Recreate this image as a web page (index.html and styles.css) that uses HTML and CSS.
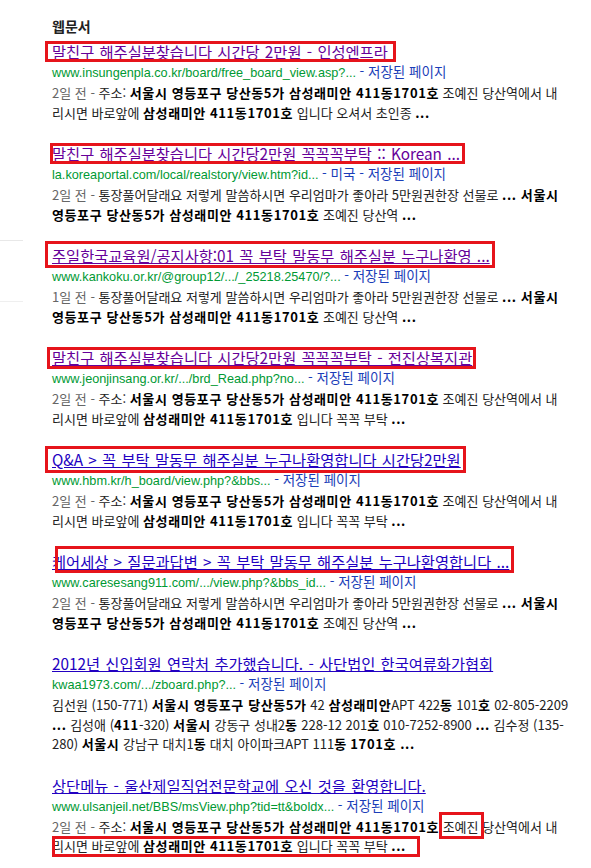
FILE: index.html
```html
<!DOCTYPE html>
<html lang="ko">
<head>
<meta charset="utf-8">
<title>웹문서</title>
<link rel="stylesheet" href="styles.css">
</head>
<body>
<div class="page">
  <div class="side"><div class="side-box"></div></div>
  <div class="main">
    <h2 class="heading">웹문서</h2>

    <div class="result">
      <div class="title"><a class="visited" href="#">말친구 해주실분찾습니다 시간당 2만원 - 인성엔프라</a><span class="mark m1"></span></div>
      <div class="url">www.insungenpla.co.kr/board/free_board_view.asp?... <span class="meta">- <a href="#">저장된 페이지</a></span></div>
      <div class="snippet"><span class="date">2일 전 - </span>주소: <b>서울시 영등포구 당산동5가 삼성래미안 411동1701호</b> 조예진 당산역에서 내<br>리시면 바로앞에 <b>삼성래미안 411동1701호</b> 입니다 오셔서 초인종 <b>...</b></div>
    </div>

    <div class="result">
      <div class="title"><a class="visited" href="#">말친구 해주실분찾습니다 시간당2만원 꼭꼭꼭부탁 :: Korean ...</a><span class="mark m2"></span></div>
      <div class="url">la.koreaportal.com/local/realstory/view.htm?id... <span class="meta">- <a href="#">미국</a> - <a href="#">저장된 페이지</a></span></div>
      <div class="snippet"><span class="date">2일 전 - </span>통장풀어달래요 저렇게 말씀하시면 우리엄마가 좋아라 5만원권한장 선물로 <b>... 서울시</b><br><b>영등포구 당산동5가 삼성래미안 411동1701호</b> 조예진 당산역 <b>...</b></div>
    </div>

    <div class="result">
      <div class="title"><a class="visited" href="#">주일한국교육원/공지사항:01 꼭 부탁 말동무 해주실분 누구나환영 ...</a><span class="mark m3"></span></div>
      <div class="url">www.kankoku.or.kr/@group12/.../_25218.25470/?... <span class="meta">- <a href="#">저장된 페이지</a></span></div>
      <div class="snippet"><span class="date">1일 전 - </span>통장풀어달래요 저렇게 말씀하시면 우리엄마가 좋아라 5만원권한장 선물로 <b>... 서울시</b><br><b>영등포구 당산동5가 삼성래미안 411동1701호</b> 조예진 당산역 <b>...</b></div>
    </div>

    <div class="result">
      <div class="title"><a class="visited" href="#">말친구 해주실분찾습니다 시간당2만원 꼭꼭꼭부탁 - 전진상복지관</a><span class="mark m4"></span></div>
      <div class="url">www.jeonjinsang.or.kr/.../brd_Read.php?no... <span class="meta">- <a href="#">저장된 페이지</a></span></div>
      <div class="snippet"><span class="date">2일 전 - </span>주소: <b>서울시 영등포구 당산동5가 삼성래미안 411동1701호</b> 조예진 당산역에서 내<br>리시면 바로앞에 <b>삼성래미안 411동1701호</b> 입니다 꼭꼭 부탁 <b>...</b></div>
    </div>

    <div class="result">
      <div class="title"><a href="#">Q&amp;A &gt; 꼭 부탁 말동무 해주실분 누구나환영합니다 시간당2만원</a><span class="mark m5"></span></div>
      <div class="url">www.hbm.kr/h_board/view.php?&amp;bbs... <span class="meta">- <a href="#">저장된 페이지</a></span></div>
      <div class="snippet"><span class="date">2일 전 - </span>주소: <b>서울시 영등포구 당산동5가 삼성래미안 411동1701호</b> 조예진 당산역에서 내<br>리시면 바로앞에 <b>삼성래미안 411동1701호</b> 입니다 꼭꼭 부탁 <b>...</b></div>
    </div>

    <div class="result">
      <div class="title"><a href="#">케어세상 &gt; 질문과답변 &gt; 꼭 부탁 말동무 해주실분 누구나환영합니다 ...</a><span class="mark m6"></span></div>
      <div class="url">www.caresesang911.com/.../view.php?&amp;bbs_id... <span class="meta">- <a href="#">저장된 페이지</a></span></div>
      <div class="snippet"><span class="date">2일 전 - </span>통장풀어달래요 저렇게 말씀하시면 우리엄마가 좋아라 5만원권한장 선물로 <b>... 서울시</b><br><b>영등포구 당산동5가 삼성래미안 411동1701호</b> 조예진 당산역 <b>...</b></div>
    </div>

    <div class="result">
      <div class="title"><a href="#">2012년 신입회원 연락처 추가했습니다. - 사단법인 한국여류화가협회</a></div>
      <div class="url">kwaa1973.com/.../zboard.php?... <span class="meta">- <a href="#">저장된 페이지</a></span></div>
      <div class="snippet">김선원 (150-771) <b>서울시 영등포구 당산동5가</b> 42 <b>삼성래미안</b>APT 422<b>동</b> 101<b>호</b> 02-805-2209<br><b>...</b> 김성애 (<b>411</b>-320) <b>서울시</b> 강동구 성내2<b>동</b> 228-12 201<b>호</b> 010-7252-8900 <b>...</b> 김수정 (135-<br>280) <b>서울시</b> 강남구 대치1<b>동</b> 대치 아이파크APT 111<b>동</b> <b>1701호 ...</b></div>
    </div>

    <div class="result">
      <div class="title"><a href="#">상단메뉴 - 울산제일직업전문학교에 오신 것을 환영합니다.</a></div>
      <div class="url">www.ulsanjeil.net/BBS/msView.php?tid=tt&amp;boldx... <span class="meta">- <a href="#">저장된 페이지</a></span></div>
      <div class="snippet"><span class="date">2일 전 - </span>주소: <b>서울시 영등포구 당산동5가 삼성래미안 411동1701호</b> <span class="hl">조예진<span class="mark m8a"></span></span> 당산역에서 내<br><span class="hl">리시면 바로앞에 <b>삼성래미안 411동1701호</b> 입니다 꼭꼭 부탁 <b>...</b><span class="mark m8b"></span></span></div>
    </div>
  </div>
</div>
</body>
</html>
```

FILE: styles.css
```css
html, body {
  margin: 0;
  padding: 0;
  background: #ffffff;
}

body {
  font-family: "Noto Sans CJK KR", "Noto Sans", sans-serif;
  color: #222222;
}

.page {
  display: grid;
  grid-template-columns: 23px 1fr;
}

.side-box {
  margin-top: 240px;
  height: 60px;
  border-top: 1px solid #e8e8e8;
  border-bottom: 1px solid #efefef;
}

.main {
  width: 530px;
  padding: 16px 0 0 29px;
}

.heading {
  margin: 0 0 5px;
  font-size: 14px;
  line-height: 20px;
  font-weight: bold;
  color: #222222;
}

.result {
  margin-bottom: 21px;
}

.title {
  position: relative;
  display: block;
  width: max-content;
  height: 20px;
  font-size: 15.3px;
  line-height: 20px;
  word-spacing: 1px;
  white-space: nowrap;
}

.title a {
  color: #2200c1;
  text-decoration: underline;
}

.title a.visited {
  color: #660099;
}

.url {
  height: 20px;
  font-family: "Liberation Sans", Arial, sans-serif;
  font-size: 12.7px;
  line-height: 20px;
  color: #009933;
  white-space: nowrap;
}

.url .meta {
  font-family: "Noto Sans CJK KR", sans-serif;
  font-size: 13.5px;
  color: #1a3db8;
}

.url .meta a {
  color: #1a3db8;
  text-decoration: none;
}

.snippet {
  margin-top: 2px;
  font-size: 13px;
  line-height: 19.5px;
  color: #222222;
  white-space: nowrap;
}

.snippet .date {
  color: #666666;
}

.snippet b {
  color: #000000;
  letter-spacing: 0.6px;
}

.hl {
  position: relative;
}

.mark {
  position: absolute;
  box-sizing: border-box;
  border: 3px solid #e6141b;
  pointer-events: none;
}

.m1 { left: -7px; right: -8px; top: 0; height: 21px; }
.m2 { left: -2px; right: -5px; top: 0; height: 21px; }
.m3 { left: -7px; right: -5px; top: -4px; height: 27px; }
.m4 { left: -5px; right: -4px; top: 0; height: 22px; }
.m5 { left: -7px; right: -5px; top: -3px; height: 27px; }
.m6 { left: 3px; right: -5px; top: -5px; height: 27px; }
.m8a { left: -4px; right: -5px; top: -5px; height: 27px; }
.m8b { left: 0; right: -14px; top: 0; height: 21px; }
```
